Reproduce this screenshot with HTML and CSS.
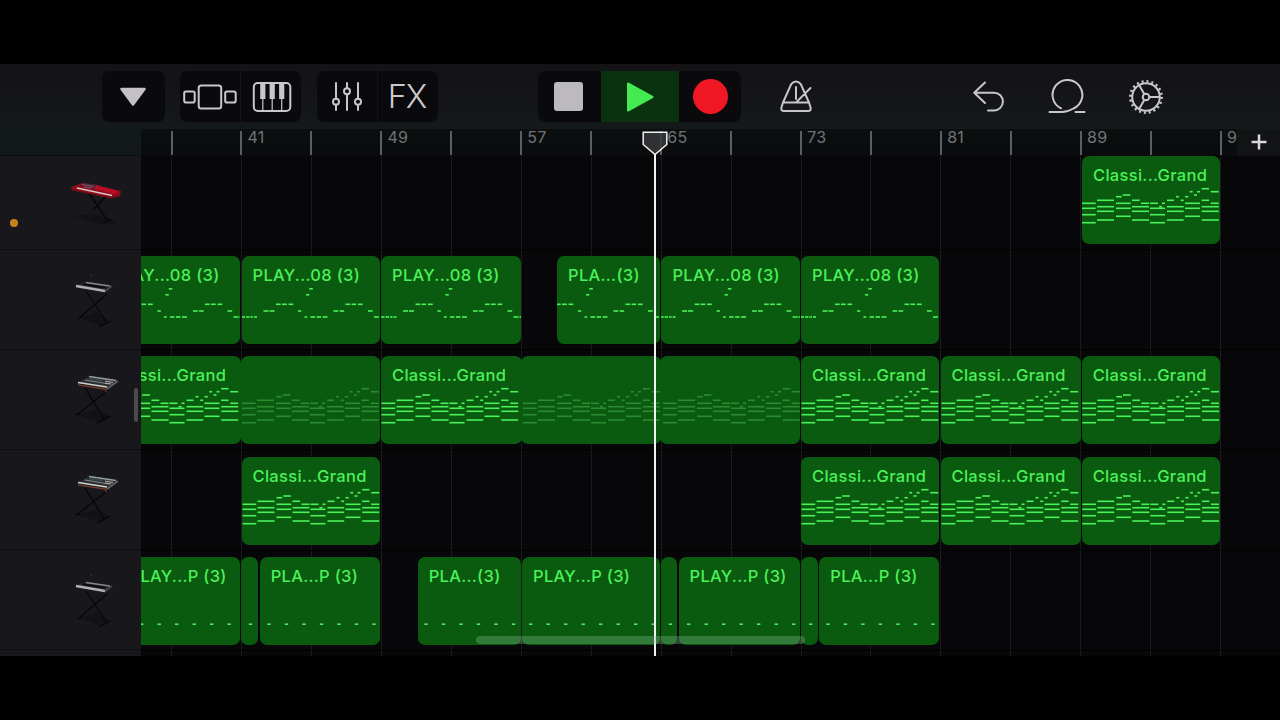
FILE: index.html
```html
<!DOCTYPE html>
<html lang="en">
<head>
<meta charset="utf-8">
<title>Tracks</title>
<link rel="stylesheet" href="styles.css">
</head>
<body>
<svg class="defs" aria-hidden="true">
  <symbol id="kb-red" viewBox="0 0 60 60">
    <path d="M12 44l26 9 18-2-22-9z" fill="#121215"/>
    <path d="M25 20l20 29M43 24L30 38M40 51l8-4" stroke="#08080a" stroke-width="1.4" fill="none"/>
    <path d="M8 15l12-4 38 8-1 5-8 2L9 18z" fill="#8d0c1c"/>
    <path d="M17 13l5-2 14 2-6 4z" fill="#4b2430"/>
    <path d="M33 13l23 6-4 3-21-5z" fill="#b80f24"/>
    <path d="M14 16l35 7.500" stroke="#d8c6c6" stroke-width="1.600"/>
    <path d="M9 18l40 8" stroke="#6d0816" stroke-width="1"/>
    <path d="M19 12.500l12 2M21 15l8 1" stroke="#8d6a76" stroke-width=".8"/>
  </symbol>
  <symbol id="kb-stage" viewBox="0 0 60 60">
    <path d="M17 49l17-6 12 9-8 5z" fill="#121215"/>
    <path d="M23 22l21 32M44 25L15 50M14 50l5-2M36 58l12-6" stroke="#08080a" stroke-width="1.300" fill="none"/>
    <path d="M13 16.500l9-3.500 27 4-7 6z" fill="#25262a"/>
    <path d="M23 13.500l24 3.500" stroke="#85858a" stroke-width="1.400"/>
    <path d="M13 17l29 5" stroke="#b0b0b3" stroke-width="2.500"/>
    <path d="M20 15.300l22 3.500" stroke="#08080a" stroke-width="1.600"/>
    <path d="M42 22.500l7-5.500" stroke="#55555a" stroke-width="1.100"/>
    <path d="M27 6l2 .5" stroke="#333336"/>
  </symbol>
  <symbol id="kb-synth" viewBox="0 0 60 60">
    <path d="M15 46l18-6 14 7-9 6z" fill="#121215"/>
    <path d="M22 19l20 32M45 21L14 46M12 46l5-1M34 54l13-7" stroke="#08080a" stroke-width="1.500" fill="none"/>
    <path d="M14 14l13-7 28 5-11 8z" fill="#2b2d2f"/>
    <path d="M26 7.500l27 4" stroke="#989d9d" stroke-width="1.300"/>
    <path d="M22 11l24 4" stroke="#858b8a" stroke-width="1.100"/>
    <path d="M26 9.500l14 2" stroke="#38474a" stroke-width="2"/>
    <path d="M15 13.500l29 4.500" stroke="#cfcfca" stroke-width="1.500"/>
    <path d="M15 15.800l28 4.500v3" stroke="#743c2a" stroke-width="1.300" fill="none"/>
    <path d="M42 12l8 1.500M42 14l6 1" stroke="#b5b8b7" stroke-width="1"/>
    <path d="M44 20l11-8" stroke="#626266" stroke-width="1.600"/>
  </symbol>
</svg>
<div class="app">
  <header class="toolbar">
    <div class="group">
      <button class="btn single" aria-label="Menu"><svg width="28" height="22" viewBox="0 0 28 22"><path d="M2.500 3h23L14 18.500z" fill="#c4c1c5" stroke="#c4c1c5" stroke-width="2.500" stroke-linejoin="round"/></svg></button>
    </div>
    <div class="group views">
      <button class="btn half" aria-label="Browser"><svg width="56" height="30" viewBox="0 0 56 30" class="line"><rect x="2.200" y="9.500" width="10.500" height="11" rx="1.800"/><rect x="16.700" y="3.500" width="22.500" height="23" rx="2.500"/><rect x="43.200" y="9.500" width="10.500" height="11" rx="1.800"/></svg></button>
      <button class="btn half piano" aria-label="Keyboard"><svg width="40" height="32" viewBox="0 0 40 32" class="line"><rect x="1.800" y="2" width="36.500" height="28" rx="4"/><path d="M10.800 18v11M20.200 18v11M29.700 18v11" stroke-width="1.200"/><path d="M8.200 2h5.200v16H8.200zM17.600 2h5.200v16h-5.200zM27.100 2h5.200v16h-5.200z" fill="#c9c6ca" stroke="none"/></svg></button>
    </div>
    <div class="group mix">
      <button class="btn half" aria-label="Mixer"><svg width="34" height="32" viewBox="0 0 34 32" class="line"><path d="M6 2v15.800M6 23.800V29M17 2v5.300M17 13.300V29M28 2v15.800M28 23.800V29"/><circle cx="6" cy="20.800" r="3"/><circle cx="17" cy="10.300" r="3"/><circle cx="28" cy="20.800" r="3"/></svg></button>
      <button class="btn half fx">FX</button>
    </div>
    <div class="group transport">
      <button class="btn stop" aria-label="Stop"><span class="stop-icon"></span></button>
      <button class="btn play" aria-label="Play"><svg width="30" height="34" viewBox="0 0 30 34"><path d="M3 3.500v27L27.500 17z" fill="#43ea52" stroke="#43ea52" stroke-width="2" stroke-linejoin="round"/></svg></button>
      <button class="btn rec" aria-label="Record"><span class="rec-icon"></span></button>
    </div>
    <button class="plain metro" aria-label="Metronome"><svg width="36" height="36" viewBox="0 0 36 36" class="line"><path d="M13.200 5.200q4.800-5.400 9.600 0L31 23.500H5zM5 23.500l-1.600 5.200q-.8 3.300 2.600 3.300h24q3.400 0 2.600-3.300L31 23.500M18 8v12M18.500 23l14-14"/></svg></button>
    <button class="plain undo" aria-label="Undo"><svg width="36" height="36" viewBox="0 0 36 36" class="line"><path d="M15 3.500L4.200 13.700 15 24M4.200 13.700H24a8.900 8.900 0 0 1 0 17.800h-6"/></svg></button>
    <button class="plain loop" aria-label="Loop"><svg width="40" height="36" viewBox="0 0 40 36" class="line"><path d="M14 29.300A14.900 14.900 0 1 1 26.500 29.500Q20.500 33 15 33H2.500M28.500 33h9"/></svg></button>
    <button class="plain gear" aria-label="Settings"><svg width="38" height="38" viewBox="0 0 38 38" class="line"><circle cx="19" cy="19" r="13.800"/><circle cx="19" cy="19" r="15.700" stroke-width="2.600" stroke-dasharray="2 2.932"/><circle cx="19" cy="19" r="3.300"/><path d="M22.300 19h11M17.400 16.200L11.800 6.600M17.400 21.800l-5.600 9.600"/></svg></button>
  </header>

  <div class="ruler-row">
    <div class="corner"></div>
    <div class="ruler" id="ruler"></div>
    <button class="add" aria-label="Add section"><svg width="18" height="18" viewBox="0 0 18 18"><path d="M9 1.500v15M1.500 9h15" stroke="#dad8dc" stroke-width="2.500"/></svg></button>
  </div>

  <div class="body">
    <aside class="tracks">
      <div class="track"><i class="dot"></i><svg class="thumb"><use href="#kb-red"/></svg></div>
      <div class="track"><svg class="thumb"><use href="#kb-stage"/></svg></div>
      <div class="track"><svg class="thumb"><use href="#kb-synth"/></svg></div>
      <div class="track"><svg class="thumb"><use href="#kb-synth"/></svg></div>
      <div class="track"><svg class="thumb"><use href="#kb-stage"/></svg></div>
      <div class="v-scroll"></div>
    </aside>
    <main class="lanes" id="lanes"></main>
  </div>
  <div class="playhead"><svg width="28" height="26" viewBox="0 0 28 26"><path d="M2.200 1.200h23.600v12.300L14 23.500 2.200 13.500z" fill="#38383b" fill-opacity=".85" stroke="#f0f0f0" stroke-width="1.500"/></svg><div class="stem"></div></div>
  <div class="h-scroll"></div>
</div>
<script src="app.js"></script>
</body>
</html>
```
FILE: styles.css
```css
* { box-sizing: border-box; }
body {
  margin: 0;
  width: 1280px;
  height: 720px;
  background: #000;
  overflow: hidden;
  font-family: Inter, "Liberation Sans", sans-serif;
}
button { border: 0; padding: 0; background: none; font: inherit; color: inherit; }
.defs { display: none; }
.app {
  position: relative;
  display: flex;
  flex-direction: column;
  height: 592px;
  margin-top: 64px;
  overflow: hidden;
  background: #070709;
}
.toolbar {
  display: flex;
  align-items: flex-start;
  flex: none;
  height: 65px;
  padding: 7px 0 0 102px;
  background: linear-gradient(#141416, #141416 35%, #14191a);
}
.group {
  display: flex;
  height: 51px;
  border-radius: 7px;
  overflow: hidden;
  background: #0a0a0c;
}
.views { margin-left: 15px; }
.mix { margin-left: 16px; }
.transport { margin-left: 100px; }
.btn { display: flex; align-items: center; justify-content: center; height: 51px; }
.single { width: 63px; padding-right: 2px; }
.half { width: 60px; }
.half + .half { width: 61px; border-left: 1px solid #151517; }
.piano { padding-left: 1px; }
.mix .half:first-child { padding-right: 1px; }
.half.fx { padding-right: 2px; font-size: 32.500px; font-weight: 300; color: #cbc8cc; letter-spacing: -1px; }
.stop { width: 63px; padding-right: 2px; }
.play { width: 78px; background: #0b320f; }
.rec { width: 62px; }
.stop-icon { width: 29px; height: 29px; border-radius: 3px; background: #bdbabd; }
.rec-icon { width: 35px; height: 35px; border-radius: 50%; background: #ee1723; }
.line { fill: none; stroke: #c9c6ca; stroke-width: 2; stroke-linecap: round; stroke-linejoin: round; }
.gear .line { stroke-linecap: butt; }
.plain { display: flex; align-items: center; justify-content: center; height: 51px; width: 40px; }
.metro { margin-left: 35px; }
.undo { margin-left: 152px; }
.loop { margin-left: 39px; }
.gear { margin-left: 39px; }

.ruler-row { display: flex; flex: none; height: 27px; }
.corner { width: 141px; background: #13181a; border-bottom: 1px solid #0c0d0f; }
.ruler {
  display: flex;
  width: 1096px;
  padding-left: 29.5px;
  background: linear-gradient(#0b0f10, #090b0c);
}
.bar {
  flex: none;
  width: 69.980px;
  height: 26px;
  padding-left: 7px;
  background: linear-gradient(#5c5f60, #5c5f60) 0 2px / 2px 24px no-repeat;
  font-size: 16px;
  line-height: 17px;
  letter-spacing: .2px;
  color: #717476;
}
.bar:last-child { width: 16px; }
.add { display: flex; align-items: center; justify-content: center; width: 43px; padding-bottom: 1px; background: #121315; }

.body { display: flex; height: 500px; }
.tracks { position: relative; width: 141px; background: #18181c; }
.track {
  display: flex;
  align-items: center;
  height: 100.1px;
  padding: 0 18px 1px 10px;
  border-bottom: 1px solid #0e0e11;
}
.track:first-child { height: 94px; }
.dot { width: 7.500px; height: 7.500px; margin-top: 42px; border-radius: 50%; background: #c5811d; }
.thumb { width: 60px; height: 60px; margin-left: auto; }
.v-scroll { position: absolute; left: 133.500px; top: 232px; width: 4.500px; height: 34px; border-radius: 3px; background: #4b4b4f; }
.lanes {
  width: 1139px;
  overflow: hidden;
  background:
    repeating-linear-gradient(90deg, #1b1b1e 0 1px, transparent 1px 69.950px) 30px 0 / 1200px 100% no-repeat,
    #070709;
}
.lane { position: relative; height: 100.200px; }
.lane::after { content: ""; position: absolute; left: 0; right: 0; top: 93px; height: 1px; background: #020203; }
.clip {
  position: absolute;
  top: 0;
  height: 88px;
  border-radius: 7px;
  overflow: hidden;
  background: #0a5a10;
  color: #4af158;
}
.name {
  position: absolute;
  top: 9px;
  left: 11px;
  font-size: 16.500px;
  font-weight: 450;
  line-height: 20px;
  letter-spacing: .3px;
  white-space: nowrap;
}
.notes { position: absolute; inset: 0; width: 100%; height: 100%; fill: currentColor; }
.looped { color: #2c8a31; }
.playhead { position: absolute; left: 641px; top: 67px; width: 28px; height: 525px; display: flex; flex-direction: column; align-items: center; }
.playhead svg { flex: none; }
.stem { width: 2px; height: 502px; margin-top: -3px; background: #f2f2f2; }
.h-scroll { position: absolute; left: 476px; top: 572px; width: 329px; height: 7.500px; border-radius: 4px; background: rgba(135, 190, 145, .33); }
```
FILE: app.js
```js
const LEFT = 141;

// Bar ruler: a tick every four bars, numbered every eight
const labels = ['', '41', '', '49', '', '57', '', '65', '', '73', '', '81', '', '89', '', '9'];
document.getElementById('ruler').innerHTML =
  labels.map(t => `<div class="bar">${t}</div>`).join('');

// Notes as [x, y, width], relative to the start of an eight-bar phrase
const third = rows => rows.flatMap(([y, ...spans]) =>
  spans.map(([a, b]) => [(a - 36) / 3, (y - 18) / 3 - .8, (b - a) / 3]));
const chords = third([
  [116, [395, 417]],
  [125, [359, 368], [381, 390], [422, 446]],
  [135, [158, 181], [372, 381]],
  [140, [138, 155], [318, 327], [345, 355]],
  [151, [81, 132], [186, 209], [291, 312], [332, 341], [395, 417]],
  [160, [36, 77], [138, 182], [213, 237], [240, 264], [276, 285], [345, 390], [422, 446]],
  [170, [81, 132], [186, 237], [267, 276], [291, 341], [395, 446]],
  [175, [36, 77], [138, 182], [240, 285], [345, 390]],
  [184, [81, 132], [186, 237], [291, 341], [395, 446]],
  [194, [36, 77], [240, 285]],
  [199, [138, 182], [345, 390]],
  [210, [81, 132], [186, 237], [291, 341], [395, 446]],
  [218, [36, 77], [240, 285]]
]);
const melody = [
  [0, 60.2, 3], [4, 60.2, 3.5], [8.5, 60.2, 2.5], [12, 60.2, 3], [21.5, 54.2, 5], [27.5, 54.2, 5],
  [34, 47.5, 4.7], [40, 47.5, 4.7], [46.5, 47.5, 4.7], [56, 54.2, 3.3], [62.5, 60.2, 2.7],
  [64, 38, 3.3], [67.3, 32, 3.5], [68.5, 60.2, 4.5], [74.5, 60.2, 4.5], [80.5, 60.2, 5],
  [91.5, 54.2, 4.7], [97.5, 54.2, 4.7], [103.5, 47.5, 4.7], [109.5, 47.5, 4.7], [116, 47.5, 4.7],
  [126, 54.2, 4.7], [132, 60.2, 5], [138, 60.2, 2]
];
const pulse = Array.from({ length: 8 }, (_, i) => [3 + i * 17.5, 66.4, 3.4]);

// Clips as [start, end, name, phrase start, looped]
const C = 'Classi...Grand', P = 'PLAY...08 (3)';
const lanes = [
  { notes: chords, clips: [[1082, 1220, C, 1082]] },
  { notes: melody, clips: [[101, 240.2, P, 101.5], [241.5, 380, P, 241.5], [381, 521, P, 381.5], [557, 660, 'PLA...(3)', 522], [661.4, 800, P, 661], [801, 939.3, P, 801]] },
  { notes: chords, clips: [[101, 241.2, C, 101.5], [241, 380, '', 242, 1], [381, 522, C, 381.5], [521, 660.5, '', 523, 1], [660, 800, '', 663, 1], [801, 939.3, C, 801.5], [940.5, 1080.5, C, 941], [1081.7, 1220, C, 1082]] },
  { notes: chords, clips: [[241.5, 380, C, 242], [801, 939.3, C, 801.5], [940.5, 1080.5, C, 941], [1081.7, 1220, C, 1082]] },
  { notes: pulse, clips: [[118.5, 240.2, 'PLAY...P (3)', 101.5], [241.2, 258.3, '', 246], [259.7, 380, 'PLA...P (3)', 246.5], [417.7, 521, 'PLA...(3)', 386], [522, 660, 'PLAY...P (3)', 526], [661.2, 677.2, '', 666], [678.5, 800, 'PLAY...P (3)', 666], [801, 818, '', 806], [819.3, 939.3, 'PLA...P (3)', 806]] }
];
document.getElementById('lanes').innerHTML = lanes.map(({ notes, clips }) =>
  '<div class="lane">' + clips.map(([a, b, name, origin, looped]) => {
    const all = [-140, 0].flatMap(s => notes.map(([x, y, w]) => [x + origin + s - a, y, w]))
      .filter(([x, , w]) => x + w > 0 && x < b - a);
    const rects = all.map(([x, y, w]) =>
      `<rect x="${x.toFixed(1)}" y="${y.toFixed(1)}" width="${w.toFixed(1)}" height="1.6"/>`).join('');
    const label = name ? `<span class="name">${name}</span>` : '';
    return `<div class="clip${looped ? ' looped' : ''}" style="left:${(a - LEFT).toFixed(1)}px;width:${(b - a).toFixed(1)}px">` +
      `<svg class="notes">${rects}</svg>${label}</div>`;
  }).join('') + '</div>').join('');
```
